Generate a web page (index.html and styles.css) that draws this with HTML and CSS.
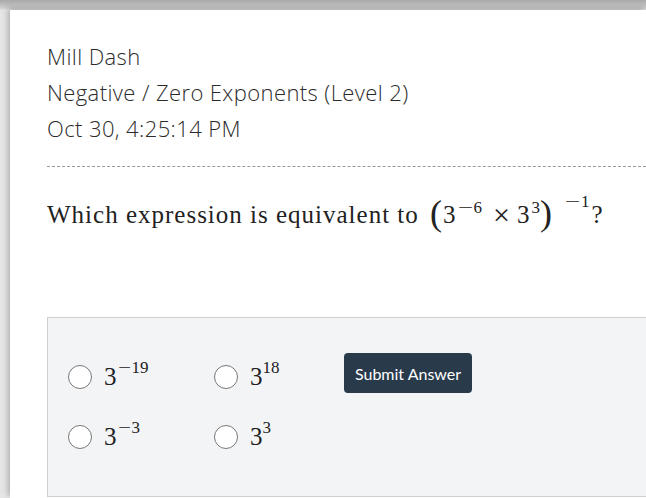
FILE: index.html
```html
<!DOCTYPE html>
<html>
<head>
<meta charset="utf-8">
<link rel="stylesheet" href="styles.css">
</head>
<body>
<div class="card">
  <div class="meta">
    <div>Mill Dash</div>
    <div>Negative / Zero Exponents (Level 2)</div>
    <div>Oct 30, 4:25:14 PM</div>
  </div>
  <div class="question">Which expression is equivalent to <span class="math"><span class="paren">(</span>3<sup><span class="minus">−</span>6</sup><span class="times">×</span>3<sup>3</sup><span class="paren">)</span><sup class="hi"><span class="minus">−</span>1</sup></span>?</div>
  <div class="answers">
    <div class="grid">
      <label class="opt"><span class="radio"></span><span class="m">3<sup><span class="minus">−</span>19</sup></span></label>
      <label class="opt"><span class="radio"></span><span class="m">3<sup>18</sup></span></label>
      <label class="opt"><span class="radio"></span><span class="m">3<sup><span class="minus">−</span>3</sup></span></label>
      <label class="opt"><span class="radio"></span><span class="m">3<sup>3</sup></span></label>
    </div>
    <button class="submit">Submit Answer</button>
  </div>
</div>
</body>
</html>
```
FILE: styles.css
```css
html, body { margin: 0; height: 100%; }
body {
  background: linear-gradient(to bottom, #a8a8a8 0, #cfcfcf 8px, #e6e6e6 10px, #e6e6e6 100%);
  padding: 10px 0 0 10px;
  box-sizing: border-box;
  overflow: hidden;
}
.card {
  background: #fff;
  height: 100%;
  padding: 28px 0 0 37px;
  box-sizing: border-box;
  box-shadow: -2px -2px 6px rgba(0,0,0,0.25);
}
.meta {
  font-family: "Open Sans", sans-serif;
  font-weight: 300;
  font-size: 22px;
  line-height: 36px;
  color: #2b2b2b;
  letter-spacing: 0.4px;
}
.question {
  border-top: 1px dashed #999;
  margin-top: 20px;
  padding-top: 28px;
  font-family: "Liberation Serif", "DejaVu Serif", serif;
  font-size: 25px;
  line-height: 40px;
  color: #222;
  height: 122px;
  letter-spacing: 1px;
}
.math { font-size: 25px; letter-spacing: 0; margin-left: 4px; }
.math sup { font-size: 17px; vertical-align: 10px; line-height: 0; margin-left: 2px; }
.math sup.hi { vertical-align: 16px; margin-left: 12px; margin-right: 2px; }
.minus {
  display: inline-block;
  width: 15px;
  text-align: center;
  transform: scaleX(1.6);
  margin-right: 1px;
}
.paren { font-size: 36px; vertical-align: -2px; line-height: 0; margin-right: 1px; }
.times { margin: 0 7px 0 11px; font-size: 30px; vertical-align: -2px; line-height: 0; }
.answers {
  background: #f3f4f6;
  border: 1px solid #cfcfcf;
  border-right: none;
  height: 180px;
  box-sizing: border-box;
  padding: 35px 0 0 20px;
  display: flex;
  align-items: flex-start;
  gap: 40px;
}
.grid {
  display: grid;
  grid-template-columns: 146px 90px;
  row-gap: 20px;
  margin-top: 4px;
}
.opt {
  display: flex;
  align-items: center;
  gap: 12px;
  height: 40px;
}
.radio {
  width: 22px;
  height: 22px;
  border: 1px solid #777;
  border-radius: 50%;
  background: #fff;
  flex: none;
}
.m {
  font-family: "Liberation Serif", "DejaVu Serif", serif;
  font-size: 25px;
  color: #222;
}
.m sup { font-size: 17px; vertical-align: 12px; line-height: 0; }
.m .minus { width: 13px; transform: scaleX(1.35); margin: 0 1px 0 1px; }
.submit {
  background: #293a4b;
  color: #fff;
  border: none;
  border-radius: 4px;
  font-family: Lato, sans-serif;
  font-size: 16px;
  width: 128px;
  height: 40px;
  padding: 0;
}
```
